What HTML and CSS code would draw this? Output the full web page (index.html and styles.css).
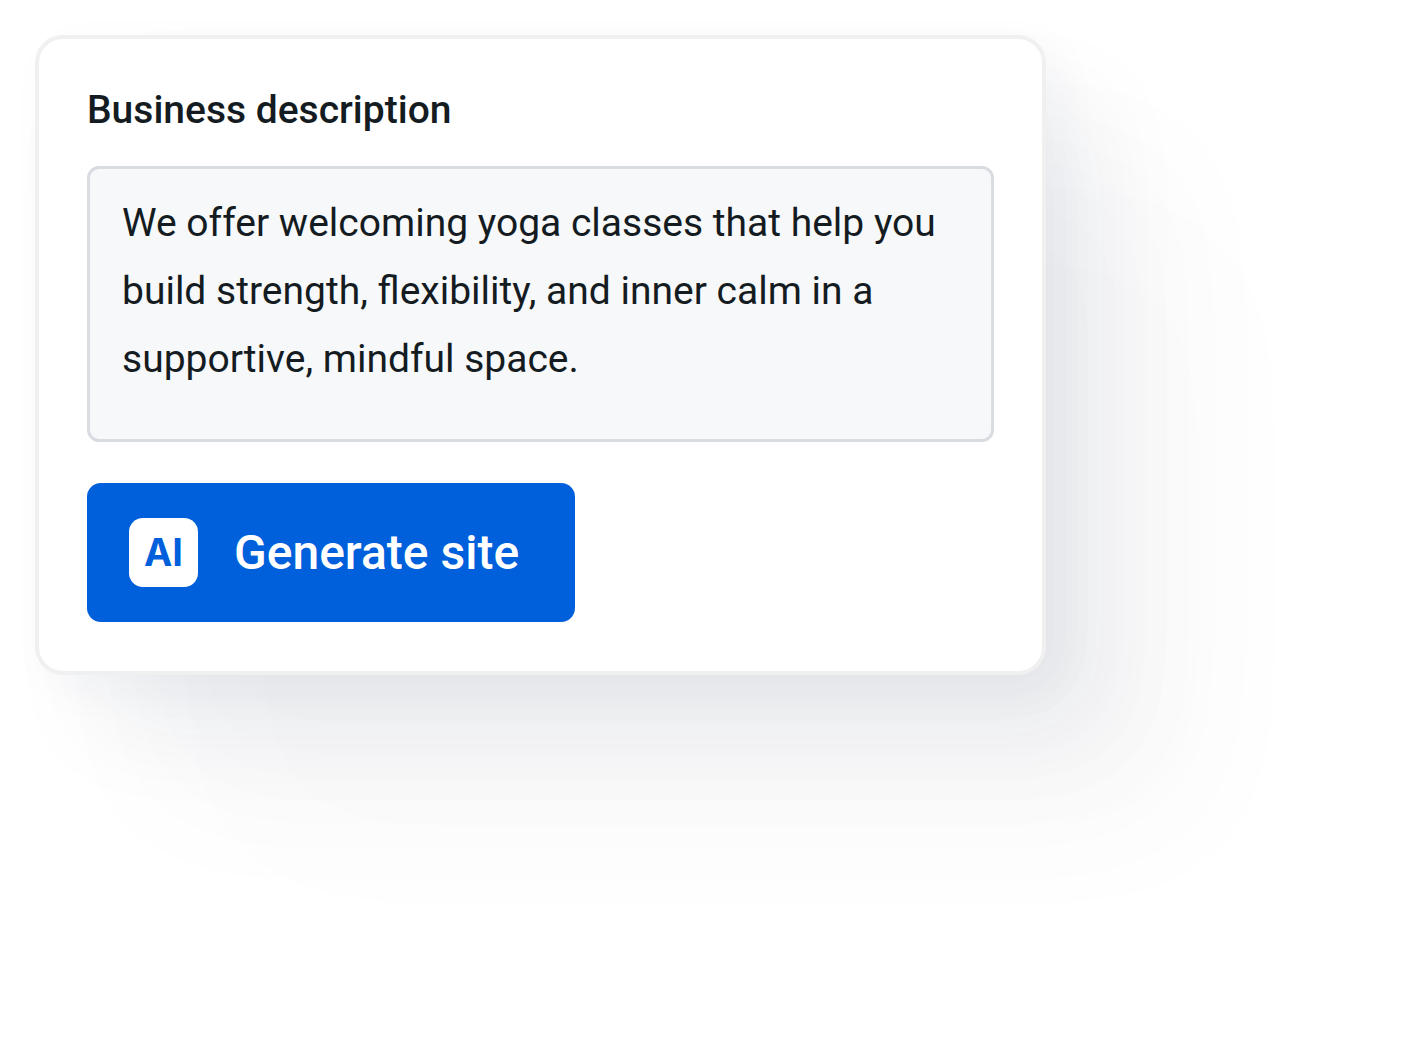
FILE: index.html
```html
<!DOCTYPE html>
<html lang="en">
  <head>
    <meta charset="UTF-8" />
    <meta name="viewport" content="width=device-width, initial-scale=1.0" />
    <title>Generate site</title>
    <link rel="stylesheet" href="styles.css">
  </head>
  <body>
    <form class="card">
      <label class="card-label" for="description">Business description</label>
      <textarea class="description" id="description" rows="3" spellcheck="false">We offer welcoming yoga classes that help you build strength, flexibility, and inner calm in a supportive, mindful space.</textarea>
      <button class="generate" type="button">
        <span class="ai-badge">AI</span>
        Generate site
      </button>
    </form>
  </body>
</html>
```

FILE: styles.css
```css
* {
  box-sizing: border-box;
}

body {
  min-height: 100vh;
  margin: 0;
  padding: 35px;
  background-color: white;
  font-family: Roboto, Arial, sans-serif;
  color: #141c22;
}

.card {
  display: flex;
  flex-direction: column;
  align-items: flex-start;
  width: 100%;
  max-width: 1011px;
  padding: 48px 48px 49px;
  border: 4px solid #f0f0f0;
  border-radius: 28px;
  background-color: white;
  box-shadow:
    14px 14px 46px rgba(24, 44, 70, 0.04),
    55px 60px 95px rgba(24, 44, 70, 0.05),
    120px 125px 140px rgba(24, 44, 60, 0.03),
    190px 190px 180px rgba(30, 40, 50, 0.01);
}

.card-label {
  margin-bottom: 33px;
  font-size: 39px;
  font-weight: 500;
  line-height: 46px;
}

.description {
  display: block;
  width: 100%;
  height: 276px;
  margin-bottom: 41px;
  padding: 20px 32px;
  border: 3px solid #d9dce0;
  border-radius: 12px;
  background-color: #f7f8fa;
  color: inherit;
  font-family: inherit;
  font-size: 39px;
  line-height: 68px;
  resize: none;
  overflow: hidden;
}

.generate {
  display: flex;
  align-items: center;
  gap: 36px;
  padding: 35px 56px 35px 42px;
  border: none;
  border-radius: 14px;
  background-color: #005fdb;
  color: white;
  font-family: inherit;
  font-size: 48px;
  font-weight: 500;
  line-height: 69px;
  cursor: pointer;
}

.ai-badge {
  width: 69px;
  height: 69px;
  border-radius: 14px;
  background-color: white;
  color: #005fdb;
  font-family: Inter, Arial, sans-serif;
  font-size: 38px;
  font-weight: 700;
  text-align: center;
}
```
